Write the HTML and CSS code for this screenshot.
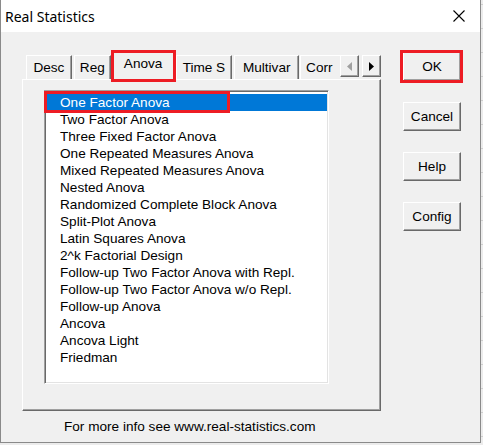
FILE: index.html
```html
<!DOCTYPE html>
<html>
<head>
<meta charset="utf-8">
<link rel="stylesheet" href="styles.css">
</head>
<body>
<div class="window">
  <div class="titlebar">
    <span class="title">Real Statistics</span>
    <svg class="close" width="12" height="12" viewBox="0 0 12 12"><path d="M0.5 0.5 L11.5 11.5 M11.5 0.5 L0.5 11.5" stroke="#000" stroke-width="1.1" fill="none"/></svg>
  </div>
  <div class="client">
    <div class="main">
      <div class="tabarea">
        <div class="tabs">
          <div class="tab t-desc">Desc</div>
          <div class="tab t-reg">Reg</div>
          <div class="tab active t-anova">Anova<span class="mark"></span></div>
          <div class="tab t-time">Time S</div>
          <div class="tab t-multi">Multivar</div>
          <div class="tab t-corr">Corr</div>
          <div class="scroll">
            <span class="sbtn"><svg width="5" height="9" viewBox="0 0 5 9"><path d="M5 0 L0 4.5 L5 9 Z" fill="#a0a0a0"/></svg></span>
            <span class="sbtn"><svg width="5" height="9" viewBox="0 0 5 9"><path d="M0 0 L5 4.5 L0 9 Z" fill="#000"/></svg></span>
          </div>
        </div>
        <div class="panel">
          <div class="listbox">
            <div class="item selected">One Factor Anova<span class="mark"></span></div>
            <div class="item">Two Factor Anova</div>
            <div class="item">Three Fixed Factor Anova</div>
            <div class="item">One Repeated Measures Anova</div>
            <div class="item">Mixed Repeated Measures Anova</div>
            <div class="item">Nested Anova</div>
            <div class="item">Randomized Complete Block Anova</div>
            <div class="item">Split-Plot Anova</div>
            <div class="item">Latin Squares Anova</div>
            <div class="item">2^k Factorial Design</div>
            <div class="item">Follow-up Two Factor Anova with Repl.</div>
            <div class="item">Follow-up Two Factor Anova w/o Repl.</div>
            <div class="item">Follow-up Anova</div>
            <div class="item">Ancova</div>
            <div class="item">Ancova Light</div>
            <div class="item">Friedman</div>
          </div>
        </div>
      </div>
      <div class="buttons">
        <div class="btn">OK<span class="mark"></span></div>
        <div class="btn">Cancel</div>
        <div class="btn">Help</div>
        <div class="btn">Config</div>
      </div>
    </div>
    <div class="footer">For more info see www.real-statistics.com</div>
  </div>
</div>
</body>
</html>
```

FILE: styles.css
```css
html, body {
  margin: 0;
  padding: 0;
}
body {
  width: 483px;
  height: 445px;
  background: repeating-linear-gradient(to bottom, #cfcfcf 0, #cfcfcf 1px, #ececec 1px, #ececec 24px);
  background-position: 0 4px;
  overflow: hidden;
  font-family: "Liberation Sans", Arial, sans-serif;
  font-size: 13.6px;
  color: #000;
}
.window {
  width: 479px;
  height: 442px;
  border: 1px solid #8a8a8a;
  border-top: 0;
  background: #f0f0f0;
  display: flex;
  flex-direction: column;
}
.titlebar {
  height: 32px;
  background: #fff;
  display: flex;
  align-items: center;
  justify-content: space-between;
  padding: 0 15px 0 4px;
  flex: none;
}
.title {
  font-family: "Noto Sans", "Open Sans", sans-serif;
  font-size: 14px;
}
.close {
  display: block;
}
.client {
  flex: 1;
  display: flex;
  flex-direction: column;
}
.main {
  display: flex;
  padding-left: 21px;
}
.tabarea {
  margin-top: 19px;
  width: 359px;
}
.tabs {
  height: 28px;
  display: flex;
  align-items: flex-end;
  padding-left: 4px;
  position: relative;
}
.tab {
  box-sizing: border-box;
  height: 24px;
  border-top: 1px solid #fff;
  border-left: 1px solid #fff;
  border-right: 1px solid #696969;
  box-shadow: inset -1px 0 #a0a0a0;
  background: #f0f0f0;
  padding-top: 4px;
  text-align: center;
  margin-right: 2px;
  white-space: nowrap;
  overflow: hidden;
}
.t-desc { width: 46px; }
.t-reg { width: 37px; margin-right: 0; }
.t-anova { width: 65px; }
.t-time { width: 57px; margin-right: 2px; }
.t-multi { width: 65px; margin-right: 1px; }
.t-corr { width: 40px; margin-right: 0; text-align: left; padding-left: 5px; border-right: 0; box-shadow: none; }
.tab.active {
  height: 29px;
  margin-bottom: -1px;
  margin-right: 0;
  padding-top: 4px;
  position: relative;
  overflow: visible;
  z-index: 2;
}
.mark {
  position: absolute;
  border: 3px solid #ed1c24;
  pointer-events: none;
}
.tab.active .mark {
  left: -1px;
  top: -2px;
  width: 59px;
  height: 26px;
}
.scroll {
  display: flex;
  gap: 3px;
  align-self: flex-start;
  margin-top: 4px;
}
.sbtn {
  box-sizing: border-box;
  width: 19px;
  height: 22px;
  background: #f0f0f0;
  border-top: 1px solid #fff;
  border-left: 1px solid #fff;
  border-right: 1px solid #696969;
  border-bottom: 1px solid #696969;
  box-shadow: inset -1px -1px #a0a0a0;
  display: flex;
  align-items: center;
  justify-content: center;
}
.panel {
  box-sizing: border-box;
  height: 332px;
  border-top: 1px solid #fff;
  border-left: 1px solid #fff;
  border-right: 1px solid #696969;
  border-bottom: 1px solid #696969;
  box-shadow: inset -1px -1px #a0a0a0;
  padding: 10px 0 0 21px;
  position: relative;
  z-index: 1;
}
.listbox {
  box-sizing: border-box;
  width: 285px;
  height: 294px;
  background: #fff;
  border-top: 1px solid #a0a0a0;
  border-left: 1px solid #a0a0a0;
  border-right: 1px solid #fff;
  border-bottom: 1px solid #fff;
  box-shadow: inset 1px 1px #696969, inset -1px -1px #e3e3e3;
  padding: 3px 1px 0 2px;
}
.item {
  height: 17px;
  line-height: 17px;
  padding-left: 13px;
  white-space: nowrap;
  position: relative;
}
.item.selected {
  background: #0078d7;
  color: #fff;
}
.item.selected .mark {
  left: -3px;
  top: -3px;
  width: 180px;
  height: 16px;
}
.buttons {
  margin-left: 22px;
  margin-top: 20px;
  display: flex;
  flex-direction: column;
  gap: 21px;
}
.btn {
  box-sizing: border-box;
  width: 58px;
  height: 29px;
  border-top: 1px solid #fff;
  border-left: 1px solid #fff;
  border-right: 1px solid #696969;
  border-bottom: 1px solid #696969;
  box-shadow: inset -1px -1px #a0a0a0;
  display: flex;
  align-items: center;
  justify-content: center;
  position: relative;
}
.btn .mark {
  left: -4px;
  top: -3px;
  width: 57px;
  height: 27px;
}
.footer {
  padding: 8px 0 0 63px;
}
```
